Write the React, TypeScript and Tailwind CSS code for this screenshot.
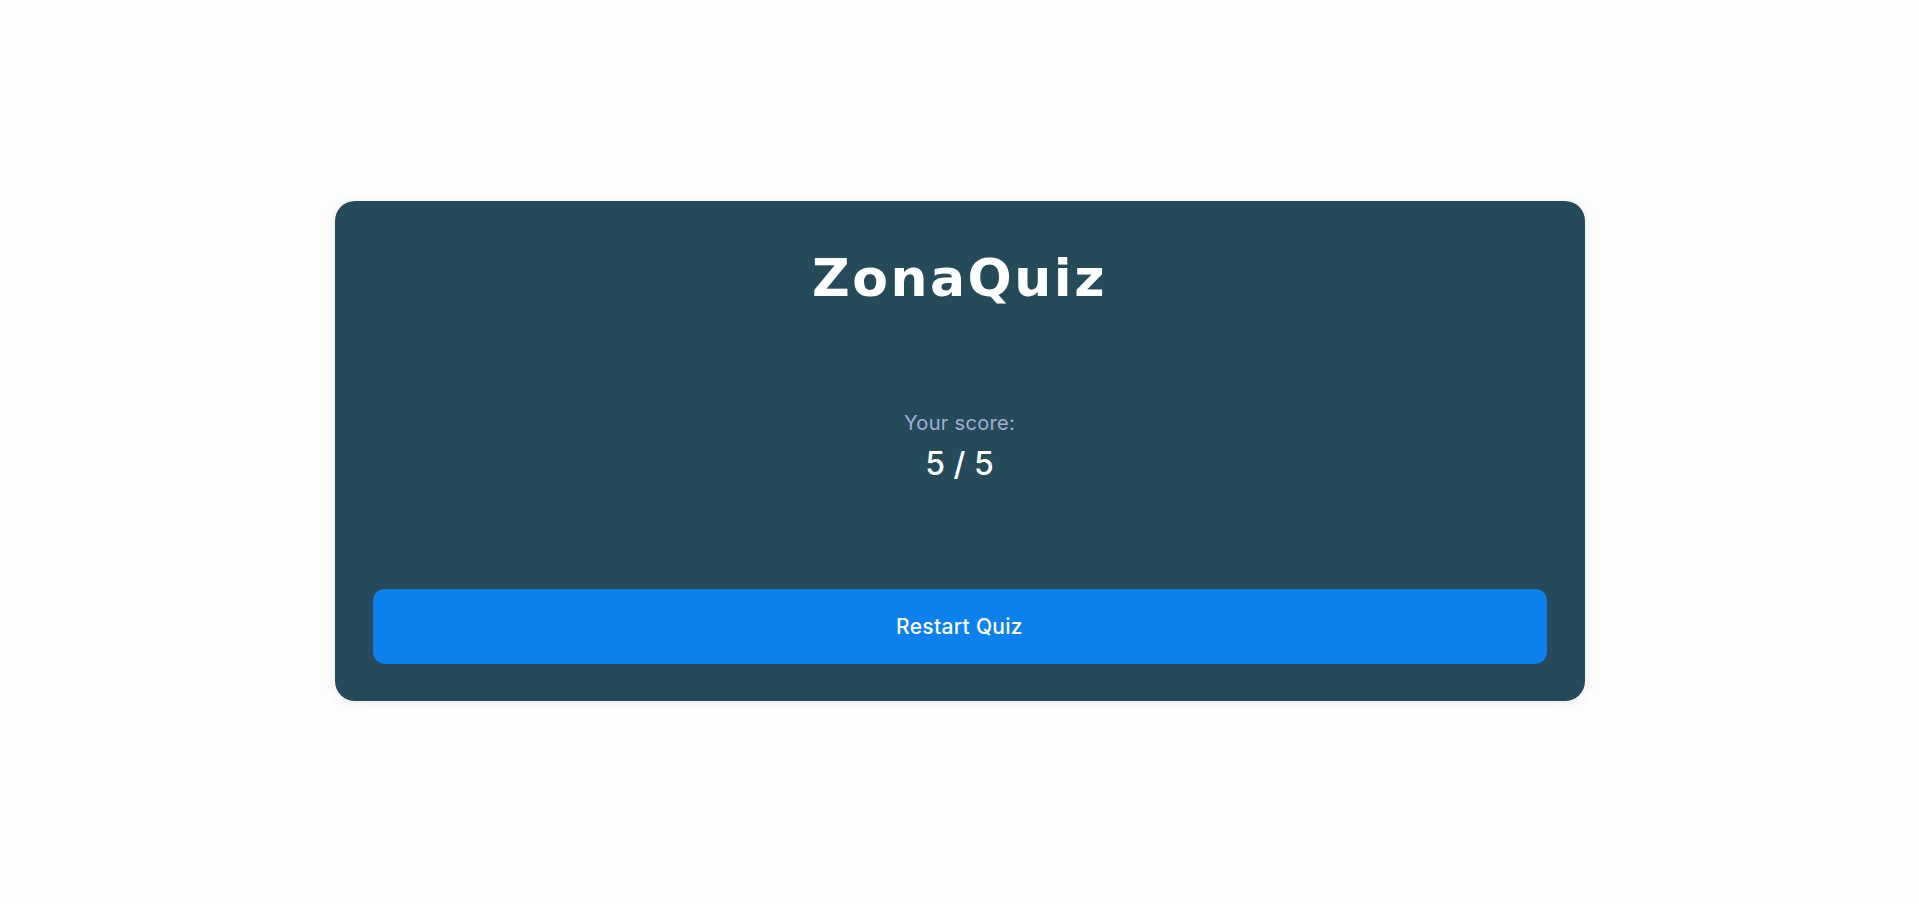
import React from "react";

export default function App() {
  return (
    <div
      className="flex h-[904px] w-full items-center justify-center bg-[#fdfdfd] pb-[2px]"
      style={{ fontFamily: "Inter, 'Open Sans', sans-serif" }}
    >
      <div className="flex h-[500px] w-[1250px] flex-col rounded-[20px] bg-[#254a5a] px-[38px] pt-[36px] pb-[37px] shadow-[0_2px_12px_rgba(0,0,0,0.08)]">
        <h1
          className="text-center text-[52px] font-bold leading-[82px] tracking-[2.5px] text-white"
          style={{ fontFamily: "'DejaVu Sans', Inter, sans-serif" }}
        >
          ZonaQuiz
        </h1>
        <div className="mt-[90px] flex flex-col items-center">
          <p className="text-[20px] leading-[28px] tracking-[0.3px] text-[#a3acd9]">Your score:</p>
          <p className="mt-[7px] text-[32px] font-medium leading-[40px] text-white">5 / 5</p>
        </div>
        <button className="mt-auto h-[75px] w-full rounded-[12px] bg-[#0c80ed] text-[21px] font-medium tracking-[0.3px] text-white">
          Restart Quiz
        </button>
      </div>
    </div>
  );
}
